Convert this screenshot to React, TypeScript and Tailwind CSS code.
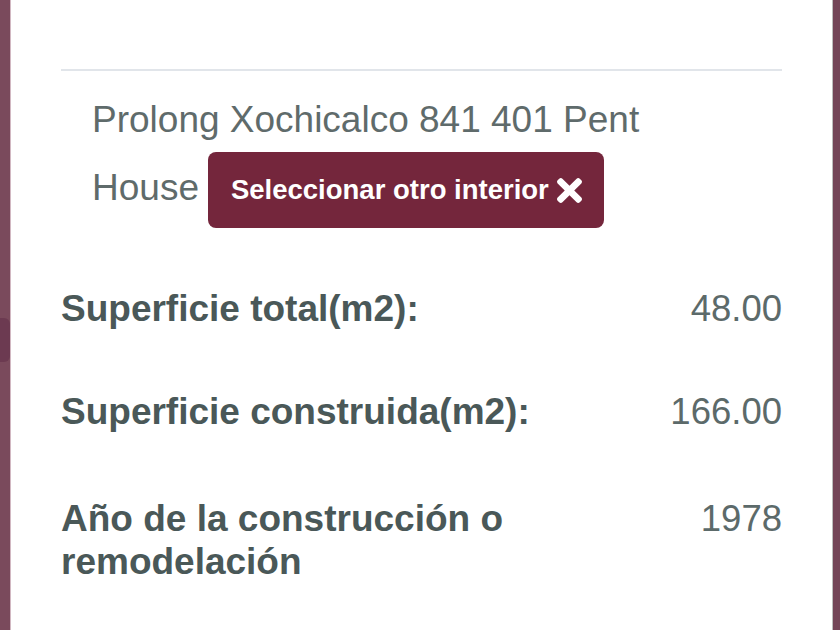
import React from "react";

function TimesIcon() {
  return (
    <svg viewBox="0 80 352 352" width="25" height="25" fill="currentColor" aria-hidden="true">
      <path d="M242.72 256l100.07-100.07c12.28-12.28 12.28-32.19 0-44.48l-22.24-22.24c-12.28-12.28-32.19-12.28-44.48 0L176 189.28 75.93 89.21c-12.28-12.28-32.19-12.28-44.48 0L9.21 111.45c-12.28 12.28-12.28 32.19 0 44.48L109.28 256 9.21 356.07c-12.28 12.28-12.28 32.19 0 44.48l22.24 22.24c12.28 12.28 32.2 12.28 44.48 0L176 322.72l100.07 100.07c12.28 12.28 32.2 12.28 44.48 0l22.24-22.24c12.28-12.28 12.28-32.19 0-44.48L242.72 256z" />
    </svg>
  );
}

function Row({ label, value, className }: { label: React.ReactNode; value: string; className: string }) {
  return (
    <div className={"flex items-start " + className}>
      <div className="w-[500px] text-[37px] leading-[43px] font-bold text-[#4a5858]">{label}</div>
      <div className="flex-1 text-right text-[36.5px] leading-[43px] text-[#5c6a6a]">{value}</div>
    </div>
  );
}

export default function App() {
  return (
    <div className="w-[840px] h-[630px] flex overflow-hidden font-['Liberation_Sans',Arial,sans-serif] bg-white">
      <div className="w-[10px] h-full bg-[#7a4a5c] relative overflow-hidden">
        <div className="absolute left-0 top-[318px] w-[10px] h-[44px] bg-[#62304a] rounded-r-[6px] opacity-60" />
      </div>
      <div className="w-[1px] h-full bg-[#d2b8c2]" />
      <div className="flex-1 h-full bg-white pl-[50px] pr-[50px] pt-[69px]">
        <div className="h-[2px] bg-[#e1e5ea]" />
        <div className="pl-[31px] mt-[28px] text-[37px] text-[#5f6b6b]">
          <div className="leading-[41px] whitespace-nowrap">Prolong Xochicalco 841 401 Pent</div>
          <div className="flex items-center mt-[12px]">
            <span className="leading-[41px] pb-[5px]">House</span>
            <button className="ml-[9px] h-[76px] flex items-center gap-[8px] pl-[23px] pr-[22px] rounded-[8px] bg-[#74263c] text-white text-[27.5px] font-bold leading-none">
              <span>Seleccionar otro interior</span>
              <TimesIcon />
            </button>
          </div>
        </div>
        <Row className="mt-[59px]" label="Superficie total(m2):" value="48.00" />
        <Row className="mt-[60px]" label="Superficie construida(m2):" value="166.00" />
        <Row
          className="mt-[64px]"
          label={
            <>
              Año de la construcción o
              <br />
              remodelación
            </>
          }
          value="1978"
        />
      </div>
      <div className="w-[1px] h-full bg-[#bdbdbd]" />
      <div className="w-[7px] h-full bg-[#744558]" />
    </div>
  );
}
